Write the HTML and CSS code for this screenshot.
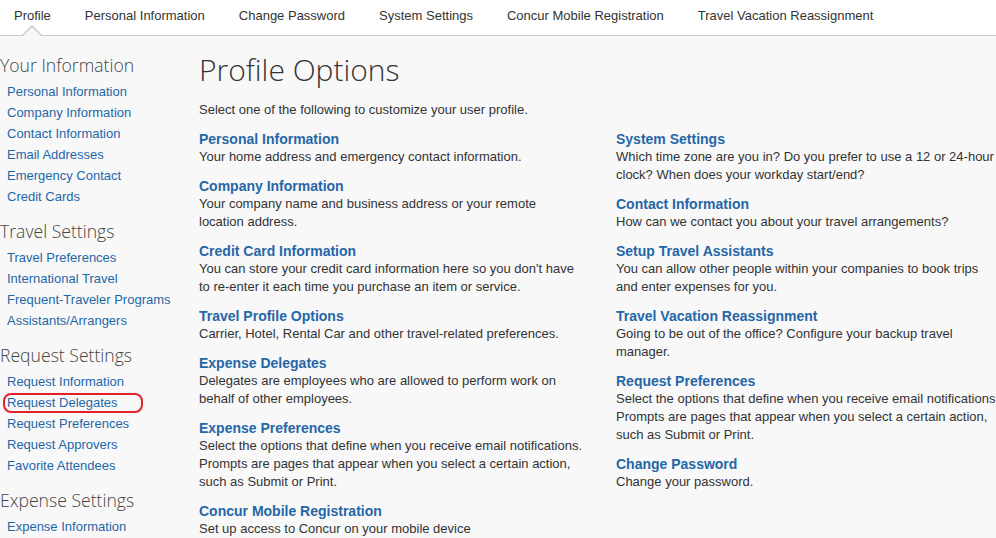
FILE: index.html
```html
<!DOCTYPE html>
<html>
<head>
<meta charset="utf-8">
<link rel="stylesheet" href="styles.css">
</head>
<body>
<nav class="topnav">
  <a class="tab active">Profile</a>
  <a class="tab">Personal Information</a>
  <a class="tab">Change Password</a>
  <a class="tab">System Settings</a>
  <a class="tab">Concur Mobile Registration</a>
  <a class="tab">Travel Vacation Reassignment</a>
</nav>
<div class="page">
  <aside class="sidebar">
    <h3 class="side-h">Your Information</h3>
    <ul class="side-list">
      <li><a>Personal Information</a></li>
      <li><a>Company Information</a></li>
      <li><a>Contact Information</a></li>
      <li><a>Email Addresses</a></li>
      <li><a>Emergency Contact</a></li>
      <li><a>Credit Cards</a></li>
    </ul>
    <h3 class="side-h">Travel Settings</h3>
    <ul class="side-list">
      <li><a>Travel Preferences</a></li>
      <li><a>International Travel</a></li>
      <li><a>Frequent-Traveler Programs</a></li>
      <li><a>Assistants/Arrangers</a></li>
    </ul>
    <h3 class="side-h">Request Settings</h3>
    <ul class="side-list">
      <li><a>Request Information</a></li>
      <li class="highlight"><a>Request Delegates</a></li>
      <li><a>Request Preferences</a></li>
      <li><a>Request Approvers</a></li>
      <li><a>Favorite Attendees</a></li>
    </ul>
    <h3 class="side-h">Expense Settings</h3>
    <ul class="side-list">
      <li><a>Expense Information</a></li>
    </ul>
  </aside>
  <main class="main">
    <h1 class="title">Profile Options</h1>
    <p class="intro">Select one of the following to customize your user profile.</p>
    <div class="cols">
      <div class="col">
        <div class="opt"><a class="opt-t">Personal Information</a><p class="opt-d">Your home address and emergency contact information.</p></div>
        <div class="opt"><a class="opt-t">Company Information</a><p class="opt-d">Your company name and business address or your remote location address.</p></div>
        <div class="opt"><a class="opt-t">Credit Card Information</a><p class="opt-d">You can store your credit card information here so you don't have to re-enter it each time you purchase an item or service.</p></div>
        <div class="opt"><a class="opt-t">Travel Profile Options</a><p class="opt-d">Carrier, Hotel, Rental Car and other travel-related preferences.</p></div>
        <div class="opt"><a class="opt-t">Expense Delegates</a><p class="opt-d">Delegates are employees who are allowed to perform work on behalf of other employees.</p></div>
        <div class="opt"><a class="opt-t">Expense Preferences</a><p class="opt-d">Select the options that define when you receive email notifications. Prompts are pages that appear when you select a certain action, such as Submit or Print.</p></div>
        <div class="opt"><a class="opt-t">Concur Mobile Registration</a><p class="opt-d">Set up access to Concur on your mobile device</p></div>
      </div>
      <div class="col">
        <div class="opt"><a class="opt-t">System Settings</a><p class="opt-d">Which time zone are you in? Do you prefer to use a 12 or 24-hour clock? When does your workday start/end?</p></div>
        <div class="opt"><a class="opt-t">Contact Information</a><p class="opt-d">How can we contact you about your travel arrangements?</p></div>
        <div class="opt"><a class="opt-t">Setup Travel Assistants</a><p class="opt-d">You can allow other people within your companies to book trips and enter expenses for you.</p></div>
        <div class="opt"><a class="opt-t">Travel Vacation Reassignment</a><p class="opt-d">Going to be out of the office? Configure your backup travel manager.</p></div>
        <div class="opt"><a class="opt-t">Request Preferences</a><p class="opt-d">Select the options that define when you receive email notifications. Prompts are pages that appear when you select a certain action, such as Submit or Print.</p></div>
        <div class="opt"><a class="opt-t">Change Password</a><p class="opt-d">Change your password.</p></div>
      </div>
    </div>
  </main>
</div>
</body>
</html>
```
FILE: styles.css
```css
html, body {
  margin: 0;
  padding: 0;
}
body {
  background: #f8f8f9;
  font-family: "Liberation Sans", Arial, sans-serif;
  color: #333;
  width: 996px;
  height: 538px;
  overflow: hidden;
}
.topnav {
  display: flex;
  gap: 34px;
  padding-left: 14px;
  height: 35px;
  background: #fff;
  border-bottom: 1px solid #c9c9c9;
}
.tab {
  position: relative;
  font-size: 13px;
  line-height: 31px;
  color: #333;
  white-space: nowrap;
}
.tab.active::before,
.tab.active::after {
  content: "";
  position: absolute;
  left: 50%;
  width: 0;
  height: 0;
  border-left: 11px solid transparent;
  border-right: 11px solid transparent;
  transform: translateX(-50%);
}
.tab.active::before {
  bottom: -1px;
  border-bottom: 11px solid #c9c9c9;
}
.tab.active::after {
  bottom: -2px;
  border-left-width: 10px;
  border-right-width: 10px;
  border-bottom: 10px solid #f8f8f9;
}
.page {
  display: flex;
}
.sidebar {
  width: 199px;
  flex: none;
  padding-top: 17px;
}
.side-h {
  margin: 0 0 4px 0;
  font-family: "Open Sans", sans-serif;
  font-weight: 300;
  font-size: 17.6px;
  line-height: 24px;
  color: #444;
  white-space: nowrap;
}
.side-list {
  list-style: none;
  margin: 0 0 12px 0;
  padding: 0;
}
.side-list li {
  font-size: 13px;
  line-height: 21px;
  padding-left: 7px;
  position: relative;
}
.side-list a {
  color: #1d67a7;
  white-space: nowrap;
}
.highlight::after {
  content: "";
  position: absolute;
  left: 3px;
  top: 1px;
  width: 136px;
  height: 16px;
  border: 2px solid #e2212b;
  border-radius: 8px;
}
.main {
  flex: none;
  width: 801px;
}
.title {
  margin: 14px 0 11px 0;
  font-family: "Open Sans", sans-serif;
  font-weight: 300;
  font-size: 30px;
  line-height: 40px;
  color: #333;
}
.intro {
  margin: 0 0 11px 0;
  font-size: 13px;
  line-height: 18px;
}
.cols {
  display: grid;
  grid-template-columns: 384px 384px;
  column-gap: 33px;
}
.opt {
  margin-bottom: 11px;
}
.opt-t {
  display: block;
  font-size: 14px;
  font-weight: bold;
  line-height: 18px;
  color: #2566a6;
}
.opt-d {
  margin: 0;
  font-size: 13px;
  line-height: 18px;
  color: #333;
}
```
